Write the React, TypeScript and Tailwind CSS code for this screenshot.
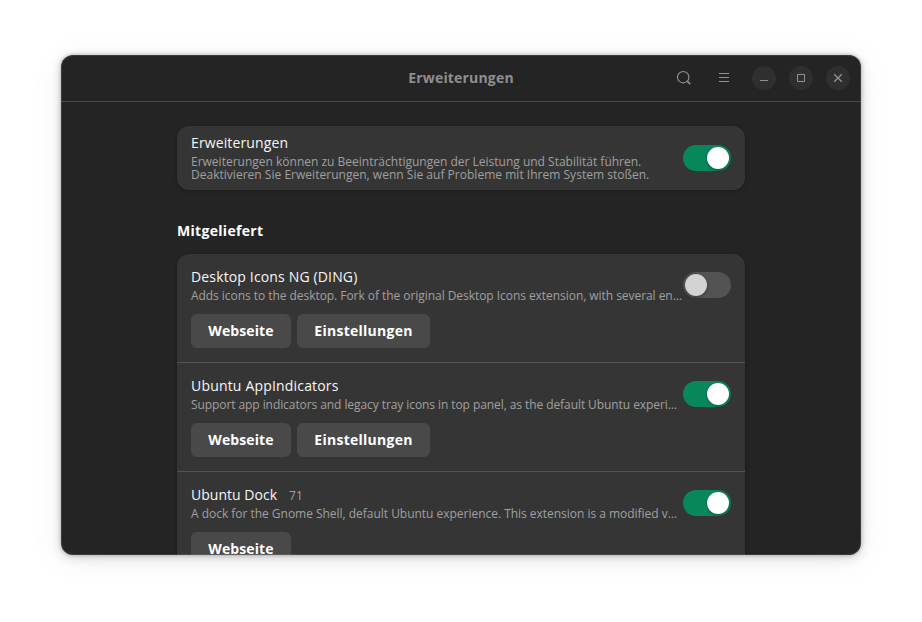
import type { ReactNode } from "react";

function Switch({ on, className = "" }: { on: boolean; className?: string }) {
  return (
    <button
      role="switch"
      aria-checked={on}
      className={`flex h-[26px] w-12 shrink-0 items-center rounded-full p-0.5 ${
        on ? "justify-end bg-[#07885a]" : "justify-start bg-[#535353]"
      } ${className}`}
    >
      <span
        className={`size-[22px] rounded-full shadow-[0_1px_3px_rgba(0,0,0,0.35)] ${
          on ? "bg-white" : "bg-[#d3d3d3]"
        }`}
      />
    </button>
  );
}

function WindowButton({ label, children }: { label: string; children: ReactNode }) {
  return (
    <button aria-label={label} className="flex size-6 items-center justify-center rounded-full bg-[#2f2f2f]">
      <svg width="24" height="24" viewBox="0 0 24 24" fill="none" stroke="#929292">
        {children}
      </svg>
    </button>
  );
}

function HeaderBar() {
  return (
    <header className="grid h-[47px] shrink-0 grid-cols-[1fr_auto_1fr] items-center border-b border-[#484848] px-[11px]">
      <div />
      <h1 className="text-[14px] leading-5 font-bold tracking-[0.18px] text-[#8f8f8f]">Erweiterungen</h1>
      <div className="flex items-center justify-end">
        <button aria-label="Suchen" className="mr-4">
          <svg width="24" height="24" viewBox="0 0 24 24" fill="none" stroke="#8f8f8f">
            <circle cx="11.2" cy="11.2" r="5.7" strokeWidth="1.1" />
            <path d="M15.2 15.2 L18.2 18.2" strokeWidth="1.7" />
          </svg>
        </button>
        <button aria-label="Menü" className="mr-4">
          <svg width="24" height="24" viewBox="0 0 24 24" fill="none" stroke="#8f8f8f">
            <path d="M7 7.5H17M7 11.5H17M7 15.5H17" />
          </svg>
        </button>
        <div className="flex gap-[13px]">
          <WindowButton label="Minimieren">
            <path d="M8 14.5H16" />
          </WindowButton>
          <WindowButton label="Maximieren">
            <path d="M8.5 8.5H15.5V15.5H8.5Z" />
          </WindowButton>
          <WindowButton label="Schließen">
            <path d="M8.2 8.2L15.8 15.8M15.8 8.2L8.2 15.8" strokeWidth="1.3" />
          </WindowButton>
        </div>
      </div>
    </header>
  );
}

function ActionButton({ wide = false, children }: { wide?: boolean; children: ReactNode }) {
  return (
    <button
      className={`h-[34px] rounded-md bg-[#494949] text-[14px] leading-5 font-bold whitespace-nowrap text-white ${
        wide ? "w-[133px] tracking-[0.26px]" : "w-[100px] tracking-[0.1px]"
      }`}
    >
      {children}
    </button>
  );
}

type Extension = {
  name: string;
  version?: string;
  description: string;
  enabled: boolean;
  settings: boolean;
  nameTracking: string;
  descriptionTracking: string;
};

const extensions: Extension[] = [
  {
    name: "Desktop Icons NG (DING)",
    description: "Adds icons to the desktop. Fork of the original Desktop Icons extension, with several en…",
    enabled: false,
    settings: true,
    nameTracking: "tracking-[0.15px]",
    descriptionTracking: "tracking-[-0.05px]",
  },
  {
    name: "Ubuntu AppIndicators",
    description: "Support app indicators and legacy tray icons in top panel, as the default Ubuntu experi…",
    enabled: true,
    settings: true,
    nameTracking: "tracking-[0.18px]",
    descriptionTracking: "tracking-[-0.078px]",
  },
  {
    name: "Ubuntu Dock",
    version: "71",
    description: "A dock for the Gnome Shell, default Ubuntu experience. This extension is a modified v…",
    enabled: true,
    settings: false,
    nameTracking: "tracking-[0.02px]",
    descriptionTracking: "tracking-[-0.024px]",
  },
];

function ExtensionRow({ ext }: { ext: Extension }) {
  return (
    <li className="h-[109px] border-b border-[#535353] px-[14px] pt-[13px]">
      <div className="flex items-start justify-between">
        <div className="whitespace-nowrap">
          <div className="flex h-5 items-baseline gap-3">
            <h3 className={`text-[14px] leading-5 text-[#f7f7f7] ${ext.nameTracking}`}>{ext.name}</h3>
            {ext.version && <span className="text-[12px] leading-5 text-[#a0a0a0]">{ext.version}</span>}
          </div>
          <p className={`mt-0.5 text-[12px] leading-[13px] text-[#a0a0a0] ${ext.descriptionTracking}`}>
            {ext.description}
          </p>
        </div>
        <Switch on={ext.enabled} className="mt-[5px]" />
      </div>
      <div className="mt-3 flex gap-1.5">
        <ActionButton>Webseite</ActionButton>
        {ext.settings && <ActionButton wide>Einstellungen</ActionButton>}
      </div>
    </li>
  );
}

export default function App() {
  return (
    <div className="flex h-[622px] w-[922px] justify-center bg-white pt-[55px] font-['Open_Sans',sans-serif] antialiased">
      <main className="h-[500px] w-[800px] rounded-xl bg-[#242424] shadow-[0_0_4px_rgba(0,0,0,0.28),0_3px_12px_rgba(0,0,0,0.14),0_4px_36px_rgba(0,0,0,0.06)]">
        <div className="relative flex h-full flex-col overflow-hidden rounded-xl">
          <HeaderBar />
          <div className="mx-auto w-[568px] pt-6">
            <section className="flex h-16 items-center justify-between rounded-xl bg-[#353535] px-[14px] shadow-[0_1px_4px_rgba(0,0,0,0.25)]">
              <div className="h-full pt-[7px] whitespace-nowrap">
                <h3 className="text-[14px] leading-5 tracking-[0.12px] text-[#f7f7f7]">Erweiterungen</h3>
                <p className="mt-0.5 text-[12px] leading-[13px] text-[#a0a0a0]">
                  Erweiterungen können zu Beeinträchtigungen der Leistung und Stabilität führen.
                  <br />
                  <span className="tracking-[0.02px]">
                    Deaktivieren Sie Erweiterungen, wenn Sie auf Probleme mit Ihrem System stoßen.
                  </span>
                </p>
              </div>
              <Switch on />
            </section>
            <h2 className="mt-[31px] mb-[13px] text-[14px] leading-5 font-bold tracking-[0.3px] text-white">
              Mitgeliefert
            </h2>
            <ul className="rounded-xl bg-[#353535] shadow-[0_1px_4px_rgba(0,0,0,0.25)]">
              {extensions.map((ext) => (
                <ExtensionRow key={ext.name} ext={ext} />
              ))}
            </ul>
          </div>
          <div className="pointer-events-none absolute inset-0 rounded-xl border border-white/10" />
        </div>
      </main>
    </div>
  );
}
